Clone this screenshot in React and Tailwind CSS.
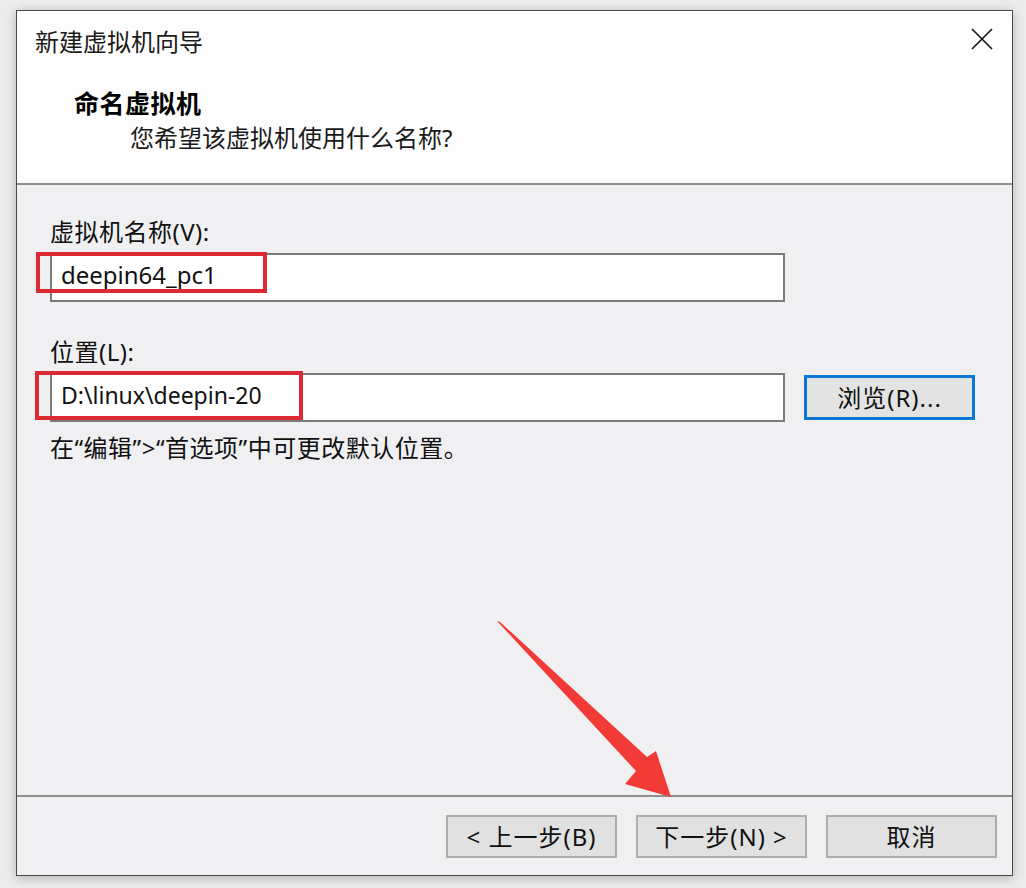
import React from "react";

const F = { fontFamily: '"Noto Sans", "Noto Sans CJK SC", sans-serif' };

function Btn({ children, className = "" }) {
  return (
    <div
      className={
        "h-[43px] w-[171px] flex items-center justify-center border-2 border-[#adadad] bg-[#e1e1e1] text-[24px] tracking-[1px] text-[#111] " +
        className
      }
    >
      {children}
    </div>
  );
}

export default function App() {
  return (
    <div
      className="relative w-[1026px] h-[888px] bg-[#ececec] pt-[10px] pl-[16px] overflow-hidden"
      style={F}
    >
      <div className="w-[997px] h-[866px] flex flex-col border border-[#4a4a4a] shadow-[0_2px_10px_rgba(0,0,0,0.25)] bg-[#f0f0f2]">
        {/* Header */}
        <div className="bg-[#fdfdfd] border-b-2 border-[#8f8f8f] h-[174px] flex flex-col">
          <div className="flex items-center justify-between pl-[18px] pr-[19px] mt-[15px] h-[32px]">
            <span className="text-[24px] leading-[32px] text-[#1a1a1a]">新建虚拟机向导</span>
            <svg width="22" height="22" viewBox="0 0 22 22" className="-mt-[6px]">
              <path d="M1 1 L21 21 M21 1 L1 21" stroke="#111" strokeWidth="1.6" fill="none" />
            </svg>
          </div>
          <div className="pl-[57px] mt-[29px] text-[25px] tracking-[0.5px] leading-[32px] font-bold text-black">命名虚拟机</div>
          <div className="pl-[113px] mt-[3px] text-[24px] leading-[32px] text-[#1a1a1a]">您希望该虚拟机使用什么名称?</div>
        </div>

        {/* Body */}
        <div className="flex-1 flex flex-col pl-[33px] pt-[32px]">
          <div className="text-[24px] tracking-[0.5px] leading-[30px] text-[#111]">虚拟机名称(V):</div>
          <div className="relative mt-[6px] w-[735px] h-[49px] bg-white border-2 border-[#7a7a7a] flex items-center pl-[9px] pb-[5px]">
            <span className="text-[24px] text-[#111]">deepin64_pc1</span>
            <div className="absolute left-[-16px] top-[-3px] w-[231px] h-[41px] border-[4px] border-[#dc2a35]" />
          </div>

          <div className="mt-[35px] text-[24px] tracking-[0.5px] leading-[30px] text-[#111]">位置(L):</div>
          <div className="mt-[6px] flex items-center">
            <div className="relative w-[735px] h-[49px] bg-white border-2 border-[#7a7a7a] flex items-center pl-[9px] pb-[4px]">
              <span className="text-[23px] text-[#111]">D:\linux\deepin-20</span>
              <div className="absolute left-[-17px] top-[-4px] w-[268px] h-[49px] border-[4px] border-[#dc2a35]" />
            </div>
            <div className="ml-[19px] h-[45px] w-[171px] flex items-center justify-center border-[3px] border-[#0a78d4] bg-[#e3e3e3] text-[24px] tracking-[1px] text-[#111]">
              浏览(R)...
            </div>
          </div>

          <div className="mt-[11px] text-[24px] tracking-[0.5px] leading-[30px] text-[#111]">在“编辑”&gt;“首选项”中可更改默认位置。</div>
        </div>

        {/* Footer */}
        <div className="border-t-2 border-[#8f8f8f] flex justify-end gap-[19px] pt-[18px] pb-[17px] pr-[15px]">
          <Btn>&lt; 上一步(B)</Btn>
          <Btn>下一步(N) &gt;</Btn>
          <Btn>取消</Btn>
        </div>
      </div>

      {/* Annotation arrow */}
      <svg className="absolute left-0 top-0 pointer-events-none" width="1026" height="888" viewBox="0 0 1026 888">
        <polygon
          points="497,621 500,622 647,757 656,751 671,797 625,784 636,771"
          fill="#f23a36"
        />
      </svg>
    </div>
  );
}
